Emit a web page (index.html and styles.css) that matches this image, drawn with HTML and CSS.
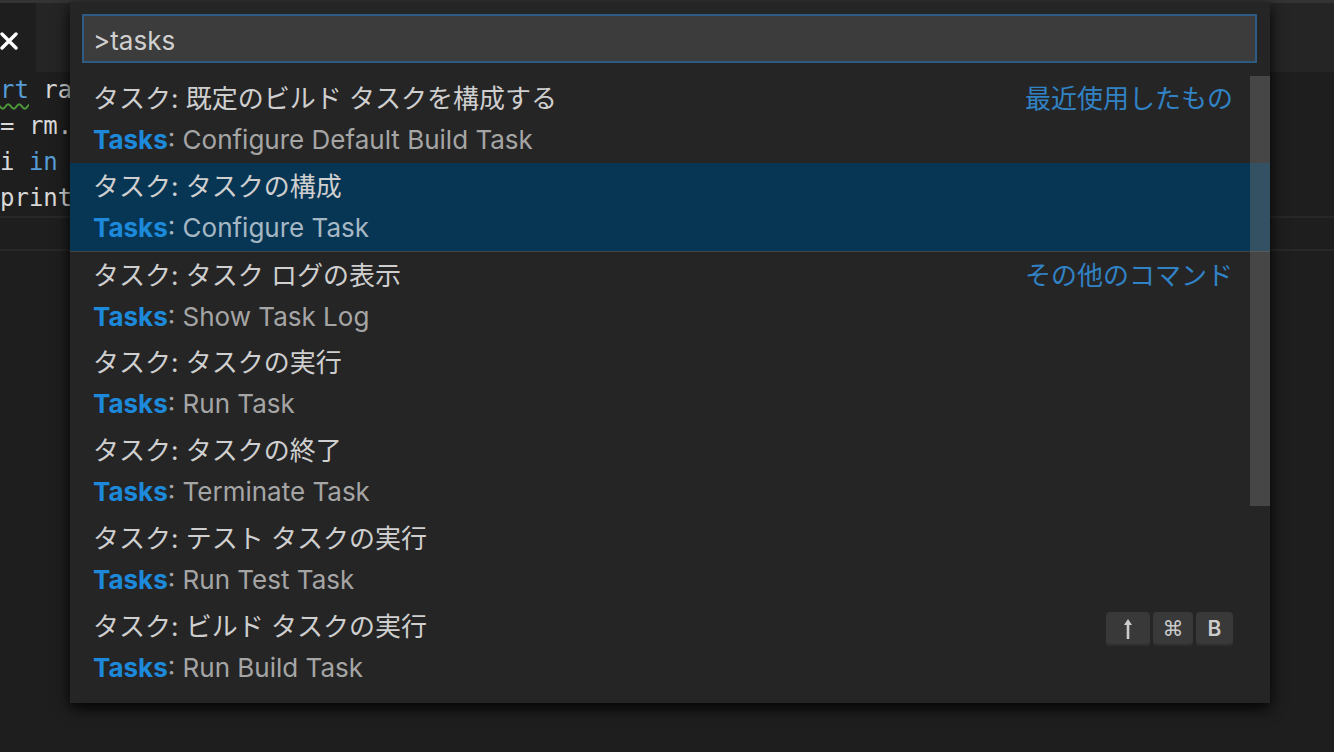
FILE: index.html
```html
<!DOCTYPE html>
<html lang="ja">
<head>
<meta charset="utf-8">
<title>Quick Open</title>
<link rel="stylesheet" href="styles.css">
</head>
<body>
<div class="window">
  <div class="top-edge"></div>
  <div class="tabs">
    <div class="tab active">
      <svg class="close" width="20" height="20" viewBox="0 0 20 20"><path d="M3 3 L17 17 M17 3 L3 17" stroke="#ffffff" stroke-width="3.4" stroke-linecap="round"/></svg>
    </div>
  </div>
  <div class="editor">
    <div class="code-line"><span class="kw squiggle">rt</span> ra</div>
    <div class="code-line">= rm.</div>
    <div class="code-line">i <span class="kw">in</span></div>
    <div class="code-line">print</div>
    <div class="sep-band"></div>
  </div>
</div>

<div class="quick-open">
  <div class="input-wrap">
    <div class="input">&gt;tasks</div>
  </div>
  <div class="list">
    <div class="row">
      <div class="label"><span class="name">タスク: 既定のビルド タスクを構成する</span><span class="group">最近使用したもの</span></div>
      <div class="detail"><span class="hl">Tasks</span>: Configure Default Build Task</div>
    </div>
    <div class="row selected">
      <div class="label"><span class="name">タスク: タスクの構成</span></div>
      <div class="detail"><span class="hl">Tasks</span>: Configure Task</div>
    </div>
    <div class="row separated">
      <div class="label"><span class="name">タスク: タスク ログの表示</span><span class="group">その他のコマンド</span></div>
      <div class="detail"><span class="hl">Tasks</span>: Show Task Log</div>
    </div>
    <div class="row">
      <div class="label"><span class="name">タスク: タスクの実行</span></div>
      <div class="detail"><span class="hl">Tasks</span>: Run Task</div>
    </div>
    <div class="row">
      <div class="label"><span class="name">タスク: タスクの終了</span></div>
      <div class="detail"><span class="hl">Tasks</span>: Terminate Task</div>
    </div>
    <div class="row">
      <div class="label"><span class="name">タスク: テスト タスクの実行</span></div>
      <div class="detail"><span class="hl">Tasks</span>: Run Test Task</div>
    </div>
    <div class="row">
      <div class="label"><span class="name">タスク: ビルド タスクの実行</span>
        <span class="keys">
          <span class="key key-shift"><svg width="12" height="24" viewBox="0 0 12 24"><path d="M6 2 L10 8 H7.3 V22 H4.7 V8 H2 Z" fill="#cccccc"/></svg></span>
          <span class="key key-cmd">&#x2318;</span>
          <span class="key key-b">B</span>
        </span>
      </div>
      <div class="detail"><span class="hl">Tasks</span>: Run Build Task</div>
    </div>
  </div>
  <div class="scrollbar"></div>
</div>
</body>
</html>
```

FILE: styles.css
```css
html, body {
  margin: 0;
  padding: 0;
  width: 1334px;
  height: 752px;
  overflow: hidden;
  background: #1e1e1e;
}

.window {
  display: flex;
  flex-direction: column;
  height: 752px;
}

.top-edge {
  height: 3px;
  background: #333333;
}

.tabs {
  height: 69px;
  background: #252526;
  display: flex;
}

.tab {
  width: 36px;
  display: flex;
  align-items: center;
  justify-content: flex-start;
}

.tab.active {
  background: #1e1e1e;
}

.close {
  margin-left: -1px;
  margin-top: 6px;
}

.editor {
  font-family: "DejaVu Sans Mono", "Liberation Mono", monospace;
  font-size: 24px;
  color: #d8d8d8;
}

.code-line {
  height: 36px;
  line-height: 36px;
  white-space: pre;
}

.kw {
  color: #569cd6;
}

.squiggle {
  text-decoration: underline wavy #4e9a3a;
  text-decoration-thickness: 2px;
  text-underline-offset: 5px;
}

.sep-band {
  height: 31px;
  border-top: 2px solid #282828;
  border-bottom: 2px solid #282828;
}

.quick-open {
  position: absolute;
  left: 70px;
  top: 2px;
  width: 1200px;
  height: 701px;
  background: #252526;
  box-shadow: 0 5px 14px rgba(0, 0, 0, 0.95);
  font-family: "Inter", "Noto Sans CJK JP", sans-serif;
  font-size: 26px;
}

.input-wrap {
  padding: 12px 13px 12px 12px;
}

.input {
  height: 45px;
  border: 2px solid #2d5b84;
  background: #3c3c3c;
  color: #d0d0d0;
  font-size: 26px;
  line-height: 49px;
  padding-left: 9px;
}

.list {
  display: flex;
  flex-direction: column;
}

.row {
  height: 88px;
  box-sizing: border-box;
  padding: 3px 37px 0 23px;
}

.row.separated {
  border-top: 1px solid #454545;
}

.row.selected {
  background: #073655;
}

.label {
  height: 41px;
  line-height: 41px;
  display: flex;
  justify-content: space-between;
  align-items: center;
  color: #cfcfcf;
  white-space: nowrap;
}

.group {
  color: #3182c4;
}

.detail {
  height: 41px;
  line-height: 41px;
  color: #a5a5a5;
  white-space: nowrap;
}

.selected .detail {
  color: #a6b7c4;
}

.hl {
  color: #1c89da;
  font-weight: 700;
}

.keys {
  display: flex;
  gap: 3px;
  margin-top: 4px;
}

.key {
  height: 34px;
  box-sizing: border-box;
  border-radius: 4px;
  background: #393939;
  box-shadow: inset 0 -2px 0 #2e2e2e;
  color: #cccccc;
  font-family: "DejaVu Sans", sans-serif;
  font-size: 21px;
  line-height: 34px;
  text-align: center;
  display: flex;
  align-items: center;
  justify-content: center;
}

.key-shift {
  width: 44px;
}

.key-cmd {
  width: 40px;
}

.key-b {
  width: 37px;
  font-family: "Inter", sans-serif;
  font-weight: 600;
}

.scrollbar {
  position: absolute;
  left: 1180px;
  top: 74px;
  width: 20px;
  height: 430px;
  background: rgba(121, 121, 121, 0.4);
}
```
